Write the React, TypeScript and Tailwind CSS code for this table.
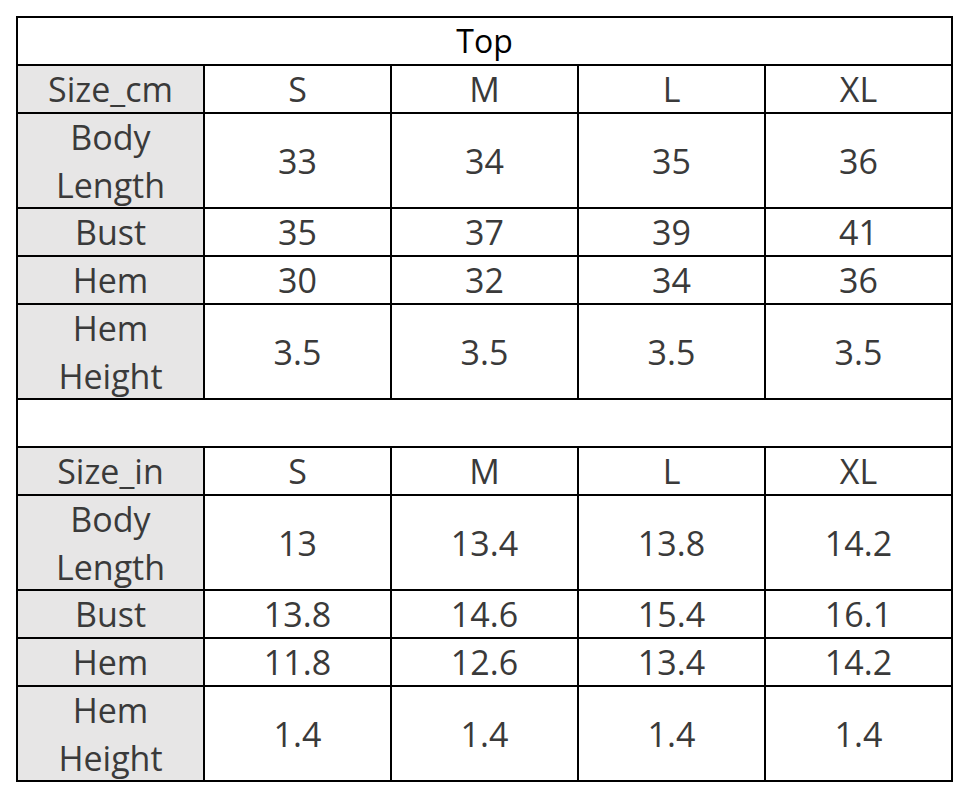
const cm = {
  unit: 'Size_cm',
  rows: [
    { label: ['Body', 'Length'], values: ['33', '34', '35', '36'] },
    { label: ['Bust'], values: ['35', '37', '39', '41'] },
    { label: ['Hem'], values: ['30', '32', '34', '36'] },
    { label: ['Hem', 'Height'], values: ['3.5', '3.5', '3.5', '3.5'] },
  ],
};

const inch = {
  unit: 'Size_in',
  rows: [
    { label: ['Body', 'Length'], values: ['13', '13.4', '13.8', '14.2'] },
    { label: ['Bust'], values: ['13.8', '14.6', '15.4', '16.1'] },
    { label: ['Hem'], values: ['11.8', '12.6', '13.4', '14.2'] },
    { label: ['Hem', 'Height'], values: ['1.4', '1.4', '1.4', '1.4'] },
  ],
};

const sizes = ['S', 'M', 'L', 'XL'];

function Cell({ children, gray, tall }: { children?: React.ReactNode; gray?: boolean; tall?: boolean }) {
  return (
    <div
      className={`flex flex-col items-center justify-center text-center leading-[48px] ${tall ? 'h-[93px]' : 'h-[46px]'} ${gray ? 'bg-[#e7e6e6]' : 'bg-white'}`}
    >
      {children}
    </div>
  );
}

function Block({ data }: { data: typeof cm }) {
  return (
    <>
      <Cell gray>{data.unit}</Cell>
      {sizes.map((s) => (
        <Cell key={s}>{s}</Cell>
      ))}
      {data.rows.map((r) => {
        const tall = r.label.length > 1;
        return (
          <div key={r.label.join(' ')} className="contents">
            <Cell gray tall={tall}>
              {r.label.map((l) => (
                <span key={l}>{l}</span>
              ))}
            </Cell>
            {r.values.map((v, i) => (
              <Cell key={i} tall={tall}>
                {v}
              </Cell>
            ))}
          </div>
        );
      })}
    </>
  );
}

export default function App() {
  return (
    <div className="w-[970px] h-[800px] bg-white pt-4 pl-4">
      <div
        className="grid grid-cols-[repeat(5,185px)] gap-[2px] bg-black p-[2px] w-fit text-[34px] text-[#3a3a3a]"
        style={{ fontFamily: '"Open Sans", "Noto Sans", sans-serif' }}
      >
        <div className="col-span-5 text-[32px] text-black">
          <Cell>Top</Cell>
        </div>
        <Block data={cm} />
        <div className="col-span-5">
          <Cell />
        </div>
        <Block data={inch} />
      </div>
    </div>
  );
}
